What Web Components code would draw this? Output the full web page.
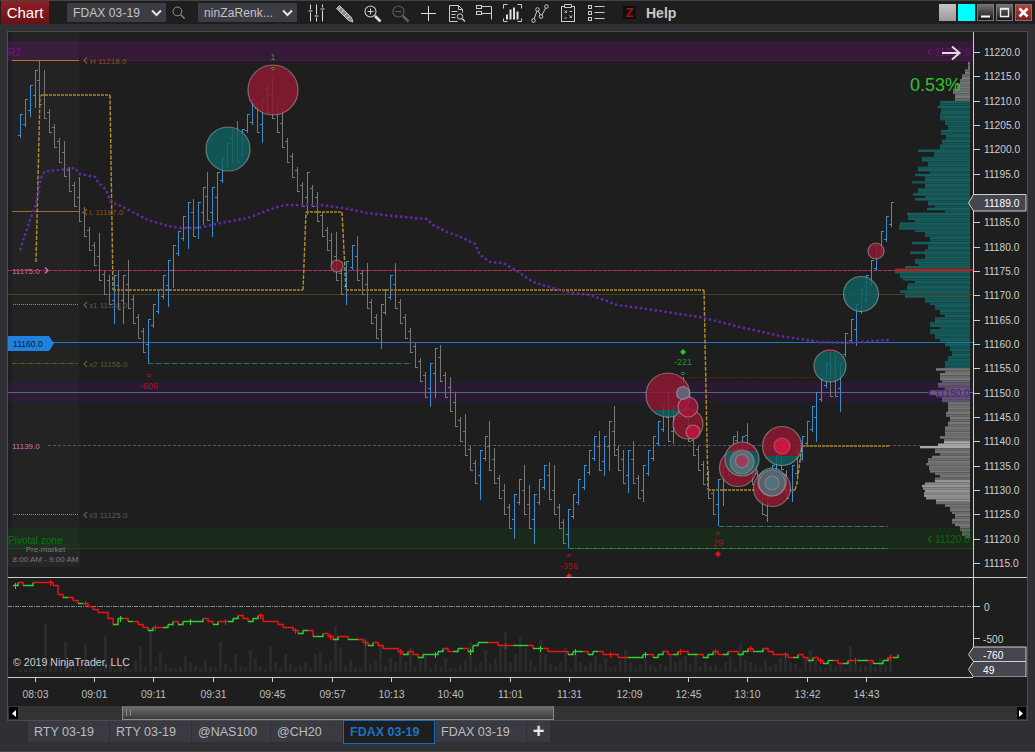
<!DOCTYPE html>
<html>
<head>
<meta charset="utf-8">
<title>Chart</title>
<style>
  html, body { margin: 0; padding: 0; background: #303034; }
  body { width: 1035px; height: 752px; overflow: hidden; font-family: "Liberation Sans", Arial, sans-serif; }
</style>
</head>
<body>
<nt-window></nt-window>
<script>
const FONT = '"Liberation Sans", Arial, sans-serif';

// x, top, bottom, b = up bar / g = down bar
const BARS = `20,114,138,b 25,99,127,b 30,85,117,b 35,70,108,b 39,60,105,g 44,70,119,g 49,109,133,g 54,124,148,g 59,138,163,g 64,141,177,g
69,167,192,g 74,182,207,g 79,177,222,g 84,207,237,g 89,227,251,g 94,242,266,g 99,233,281,g 104,271,295,g 109,275,305,g 114,275,324,b
118,270,310,g 123,275,324,b 128,260,309,g 133,295,324,g 138,314,339,g 143,328,353,g 148,319,363,b 153,304,328,b 158,289,314,b 163,275,299,b
168,260,307,b 173,245,288,b 178,231,256,b 183,216,241,b 188,202,249,b 193,199,237,g 198,202,239,b 203,187,225,b 207,172,221,g 212,187,237,b
217,172,222,b 222,158,183,b 227,143,168,b 232,129,163,g 237,121,163,g 242,129,158,b 247,114,133,b 252,99,125,b 257,102,133,g 262,99,143,b
267,85,113,g 272,77,119,g 277,102,133,g 282,109,148,g 287,138,163,g 292,153,178,g 297,167,192,g 302,182,207,g 307,172,215,b 312,185,207,g
317,192,222,g 322,212,237,g 327,227,251,g 331,233,265,g 336,232,281,g 341,270,295,g 346,261,305,b 352,245,270,b 357,236,281,g 362,270,295,g
367,263,309,g 371,299,324,g 376,314,339,g 381,304,349,b 385,289,315,b 390,275,300,b 395,263,309,g 400,299,324,g 405,314,339,g 410,328,353,g
415,343,368,g 420,358,382,g 425,372,398,g 430,363,407,b 435,348,398,b 440,345,382,g 445,372,398,g 450,377,412,g 455,393,427,g 460,417,442,g
465,414,456,g 470,446,471,g 475,460,484,g 480,450,500,b 485,436,461,b 489,421,471,g 494,448,484,g 499,475,499,g 504,484,515,g 509,504,529,g
514,494,539,b 519,479,505,b 524,465,515,g 529,485,529,g 534,494,544,b 539,479,505,b 544,465,490,b 549,462,500,g 554,465,515,g 559,504,529,g
563,519,544,g 568,509,548,b 573,494,519,b 578,479,505,b 584,465,490,b 589,450,475,b 594,436,461,b 599,431,471,g 604,436,476,b 609,421,471,b
614,406,456,g 618,446,471,g 623,450,484,g 628,450,493,b 633,441,484,g 638,475,499,g 643,465,502,b 648,450,476,b 653,436,461,b 658,421,446,b
663,406,432,b 668,392,442,g 673,406,444,b 678,393,417,g 683,377,408,g 688,407,442,g 693,437,456,g 698,446,471,g 703,461,485,g 708,470,499,g
713,490,515,g 718,479,526,b 723,465,506,b 728,455,476,g 733,436,465,b 737,431,465,g 742,436,465,b 747,423,460,g 752,455,485,g 757,470,495,g
762,487,515,g 767,490,522,b 772,465,495,b 776,455,487,b 781,445,470,g 786,470,499,g 792,465,502,b 797,450,476,b 802,436,461,b 807,421,446,b
812,406,432,b 816,392,442,b 821,378,402,b 826,363,388,b 830,353,397,g 835,355,397,g 840,363,412,b 845,333,357,b 851,319,343,b 856,304,346,b
861,289,314,b 866,275,303,b 871,260,286,b 876,245,271,b 881,231,255,b 886,216,242,b 891,202,227,b`
  .trim().split(/\s+/).map(s => { const p = s.split(','); return { x: +p[0], t: +p[1], b: +p[2], up: p[3] === 'b' }; });

const VWAP = '20,250 30,220 36,204 41,178 45,171 60,170 75,168 80,174 95,177 98,182 106,190 111,202 123,207 148,220 168,226 181,228 198,228 221,223 248,218 271,209 285,205 305,205 320,205 343,208 367,213 393,216 427,219 433,225 447,232 463,238 475,244 480,255 490,262 503,263 517,271 533,282 553,288 567,292 590,295 607,301 617,305 640,308 660,311 700,317 740,327 780,336 820,342 850,343 870,341 890,340';

// y, left edge of the volume profile row
const PROFILE = [[62,968],[68,965],[73,962],[78,960],[83,957],[88,953],[93,955],[100,940],[105,938],[108,941],[113,940],[118,945],[123,948],[128,941],[133,946],[138,942],[143,940],[148,918],[151,934],[155,922],[160,928],[165,918],[170,930],[173,915],[176,925],[180,912],[183,925],[186,908],[188,918],[191,913],[194,925],[197,915],[200,928],[203,935],[206,927],[210,945],[212,907],[215,908],[218,915],[220,900],[223,899],[226,899],[229,915],[232,925],[236,930],[240,912],[243,928],[247,925],[250,910],[253,925],[257,915],[262,918],[265,905],[268,895],[272,900],[276,903],[279,915],[282,908],[285,907],[288,900],[291,905],[294,905],[297,925],[301,930],[305,935],[309,940],[313,945],[317,935],[321,930],[325,940],[329,930],[333,935],[337,940],[341,945],[345,950],[350,952],[356,948],[360,945],[365,945],[367,936],[370,945],[373,940],[378,942],[382,938],[386,945],[390,930],[393,936],[397,942],[400,948],[405,948],[410,946],[415,950],[420,948],[425,945],[431,945],[435,940],[438,944],[442,938],[445,920],[448,935],[451,940],[455,932],[458,928],[461,926],[465,929],[468,930],[471,935],[474,940],[477,935],[480,925],[483,922],[486,923],[489,925],[492,924],[495,926],[498,936],[502,945],[505,950],[510,952],[513,955],[518,952],[522,955],[526,960],[530,962],[535,965]];

const CVD = '13,584 25,583 35,582 42,581 48,582 52,585 56,590 60,594 65,597 70,600 78,603 85,605 92,607 100,612 108,617 113,622 120,618 130,619 140,626 150,629 160,627 170,624 180,622 190,621 200,618 210,621 220,622 230,618 240,616 250,619 258,617 270,622 280,625 290,628 300,631 315,634 330,637 350,638 365,642 380,645 400,652 425,655 440,650 455,649 470,648 480,642 488,640 500,645 520,645 535,648 550,650 575,652 600,652 625,658 650,655 665,653 680,652 700,655 730,652 760,650 775,653 790,655 805,658 820,660 840,662 860,658 875,662 885,660 890,657 897,654';

const VOLUME = [2,3,4,3,5,48,10,6,7,30,12,4,6,28,5,15,4,36,9,3,7,8,3,12,26,5,44,6,20,8,4,3,5,16,10,6,4,12,6,5,30,8,4,18,6,5,22,14,6,3,26,10,5,18,8,5,6,10,4,18,20,8,12,46,24,7,12,5,4,34,8,12,26,6,14,10,20,10,24,6,12,16,4,8,6,14,4,3,7,12,30,5,10,22,8,14,28,40,10,18,36,24,12,6,32,18,8,6,10,24,4,18,10,6,9,16,8,14,5,6,12,22,10,4,8,13,7,5,8,6,18,10,12,16,8,20,6,10,6,7,3,10,15,5,28,12,10,7,5,12,6,8,14,18,10,8,3,14,22,12,6,4,8,5,10,4,26,8,7,6,12,5,14,7,18,6,4];

function pts(str) { return str.trim().split(/\s+/).map(p => p.split(',').map(Number)); }

function text(x, y, str, size, fill, extra) {
  return `<text x="${x}" y="${y}" font-size="${size}" fill="${fill}" ${extra || ''}>${str}</text>`;
}

// small chevron that sits before a level label
function chev(x, y, c, right) {
  const d = right ? `M${x} ${y - 3}L${x + 3} ${y}L${x} ${y + 3}` : `M${x + 3} ${y - 3}L${x} ${y}L${x + 3} ${y + 3}`;
  return `<path d="${d}" fill="none" stroke="${c}" stroke-width="1.3"/>`;
}

function bubble(id, x, y, r, red, teal, split, edge) {
  const stroke = edge || 'rgba(185,185,185,.5)';
  // red on top, teal below the split line
  if (split === undefined) {
    return `<circle cx="${x}" cy="${y}" r="${r}" fill="${red || teal}" stroke="${stroke}" stroke-width="1.2"/>`;
  }
  const off = ((split - (y - r)) / (2 * r)).toFixed(3);
  return `<linearGradient id="${id}" x1="0" y1="0" x2="0" y2="1"><stop offset="${off}" stop-color="${red}"/><stop offset="${off}" stop-color="${teal}"/></linearGradient>
    <circle cx="${x}" cy="${y}" r="${r}" fill="url(#${id})" stroke="${stroke}" stroke-width="1.2"/>`;
}

class NtSelect extends HTMLElement {
  connectedCallback() {
    const shadow = this.attachShadow({ mode: 'open' });
    shadow.innerHTML = `
      <style>
        :host { display: flex; align-items: center; justify-content: space-between; width: 99px; height: 19px; box-sizing: border-box;
          padding: 0 4px 0 6px; background: #3c3c44; color: #c4c4c4; font: 12px ${FONT}; letter-spacing: .1px; }
        svg { display: block; }
      </style>
      <slot></slot>
      <svg width="11" height="8" viewBox="0 0 11 8"><path d="M1 1.5 L5.5 6 L10 1.5" fill="none" stroke="#e4e4e4" stroke-width="2"/></svg>
    `;
  }
}
customElements.define('nt-select', NtSelect);

const ICONS = {
  sliders: '<path d="M4 1v5M4 9v9M10 1v10M10 14v4M16 1v3M16 7v11" stroke="#ddd"/><path d="M2 7.5h4M8 12.5h4M14 5.5h4" stroke="#ddd"/>',
  pencil: '<path d="M2 5 L5 2 L17 14 L18.5 18.5 L14 17 Z" fill="#8c8c8c" stroke="#ddd" stroke-width=".8"/><path d="M4 6 L6 4 M7 9 L9 7 M10 12 L12 10 M13 15 L15 13" stroke="#eee" stroke-width=".9"/>',
  zoomIn: '<circle cx="8" cy="8" r="5.5" fill="none" stroke="#ccc" stroke-width="1.1"/><path d="M5 8h6M8 5v6" stroke="#ccc"/><path d="M12.5 12.5 L18 18" stroke="#ddd" stroke-width="2.6"/>',
  zoomOut: '<circle cx="8" cy="8" r="5.5" fill="none" stroke="#5e5e5e" stroke-width="1.1"/><path d="M5 8h6" stroke="#5e5e5e"/><path d="M12.5 12.5 L18 18" stroke="#5e5e5e" stroke-width="2.6"/>',
  plus: '<path d="M2.5 10h15M10 2.5v15" stroke="#ddd"/>',
  docSearch: '<path d="M3 2h9l4 4v3M3 2v16h8M12 2v4h4" fill="none" stroke="#ccc"/><path d="M5 8h6M5 11h4M5 14h4" stroke="#ccc"/><circle cx="13.5" cy="13" r="2.7" fill="none" stroke="#ccc"/><path d="M15.5 15 L18.5 18" stroke="#ccc" stroke-width="1.4"/>',
  boxes: '<rect x="2" y="2" width="5" height="3" fill="none" stroke="#ccc"/><rect x="2" y="8" width="5" height="3" fill="none" stroke="#ccc"/><path d="M7 3h10M7 10h10M17 3v13" stroke="#ccc" fill="none"/>',
  bars: '<path d="M1 5V1h4M15 1h4V5M1 15v3h4M15 18h4V15" fill="none" stroke="#ccc"/><path d="M4.5 16v-5M8 16V6M11.5 16V4M15 16V8" stroke="#ddd" stroke-width="2"/>',
  nodes: '<path d="M3 17 L7 6 L10.5 13 L16 3" fill="none" stroke="#ccc"/><circle cx="3" cy="17" r="1.8" fill="#1e1e1e" stroke="#ccc"/><circle cx="7" cy="6" r="1.8" fill="#1e1e1e" stroke="#ccc"/><circle cx="10.5" cy="13" r="1.8" fill="#1e1e1e" stroke="#ccc"/><circle cx="16" cy="3" r="1.8" fill="#1e1e1e" stroke="#ccc"/>',
  docX: '<rect x="3" y="3" width="13" height="15" fill="none" stroke="#ccc"/><path d="M6 1h7v3H6z" fill="#1e1e1e" stroke="#ccc"/><path d="M6 7l2.5 2.5M8.5 7L6 9.5M11 12l2.5 2.5M13.5 12L11 14.5M6 14.5h2M11 8h2.5" stroke="#ccc"/>',
  list: '<rect x="2" y="2" width="3" height="3" fill="none" stroke="#ccc"/><rect x="2" y="8" width="3" height="3" fill="none" stroke="#ccc"/><rect x="2" y="14" width="3" height="3" fill="none" stroke="#ccc"/><path d="M8 3h10M8 9h10M8 15h10" stroke="#ccc"/>',
  search: '<circle cx="8" cy="8" r="5.5" fill="none" stroke="#999" stroke-width="1.2"/><path d="M12 12 L17 17" stroke="#999" stroke-width="1.6"/>'
};

class NtIcon extends HTMLElement {
  connectedCallback() {
    const shadow = this.attachShadow({ mode: 'open' });
    shadow.innerHTML = `
      <style>
        :host { display: flex; width: 28px; height: 24px; align-items: center; justify-content: center; }
        svg { display: block; }
      </style>
      <svg width="20" height="20" viewBox="0 0 20 20"><g transform="translate(.5 .5)">${ICONS[this.getAttribute('name')]}</g></svg>
    `;
  }
}
customElements.define('nt-icon', NtIcon);

class NtWinButton extends HTMLElement {
  connectedCallback() {
    const kind = this.getAttribute('kind');
    const shadow = this.attachShadow({ mode: 'open' });
    const glyph = {
      plain: '',
      min: '<path d="M4 12.5h9" stroke="#fff" stroke-width="2"/>',
      max: '<path d="M4.5 4.5h8v8h-8z M4 5h9" fill="none" stroke="#eee" stroke-width="1.3"/>',
      close: '<path d="M4.5 4.5 L12.5 12.5 M12.5 4.5 L4.5 12.5" stroke="#fff" stroke-width="2.6"/>'
    }[kind === 'gray' || kind === 'cyan' ? 'plain' : kind];
    const bg = { gray: 'linear-gradient(#c4c4c4,#9a9a9a)', cyan: '#00ffff', min: 'linear-gradient(#777,#111)', max: 'linear-gradient(#777,#111)', close: 'linear-gradient(#b8413f,#7e1c1c)' }[kind];
    shadow.innerHTML = `
      <style>
        :host { display: block; width: 17px; height: 17px; background: ${bg}; box-sizing: border-box; outline: ${kind === 'gray' || kind === 'cyan' ? 'none' : '1px solid #777'}; outline-offset: -1px; }
        svg { display: block; }
      </style>
      <svg width="17" height="17" viewBox="0 0 17 17">${glyph}</svg>
    `;
  }
}
customElements.define('nt-win-button', NtWinButton);

class NtToolbar extends HTMLElement {
  connectedCallback() {
    const names = ['sliders','pencil','zoomIn','zoomOut','plus','docSearch','boxes','bars','nodes','docX','list'];
    const shadow = this.attachShadow({ mode: 'open' });
    shadow.innerHTML = `
      <style>
        :host { display: flex; align-items: center; height: 24px; box-sizing: border-box; background: #1e1e1e; border-top: 1px solid #444;
          font-family: ${FONT}; padding-left: 1px; }
        .title { width: 48px; height: 23px; margin-top: 0; background: linear-gradient(#8e2026,#6a1116); color: #fff; font-size: 15px;
          display: flex; align-items: center; justify-content: center; }
        .first { margin-left: 18px; }
        .search { display: flex; width: 32px; justify-content: flex-start; padding-left: 5px; box-sizing: border-box; }
        .icons { display: flex; margin-left: 5px; }
        .z { margin-left: 13px; width: 13px; height: 13px; background: #0f0f0f; color: #a80e0e; font: bold 13px/13px ${FONT}; text-align: center; }
        .help { margin-left: 10px; color: #c8c8c8; font-weight: bold; font-size: 14px; }
        .spacer { flex: 1; }
        .win { display: flex; gap: 2px; padding-right: 3px; }
      </style>
      <div class="title">Chart</div>
      <nt-select class="first">FDAX 03-19</nt-select>
      <div class="search"><svg width="16" height="16" viewBox="0 0 20 20">${ICONS.search}</svg></div>
      <nt-select>ninZaRenk...</nt-select>
      <div class="icons">${names.map(n => `<nt-icon name="${n}"></nt-icon>`).join('')}</div>
      <div class="z">Z</div>
      <div class="help">Help</div>
      <div class="spacer"></div>
      <div class="win">
        <nt-win-button kind="gray"></nt-win-button>
        <nt-win-button kind="cyan"></nt-win-button>
        <nt-win-button kind="min"></nt-win-button>
        <nt-win-button kind="max"></nt-win-button>
        <nt-win-button kind="close"></nt-win-button>
      </div>
    `;
  }
}
customElements.define('nt-toolbar', NtToolbar);

class NtPricePanel extends HTMLElement {
  connectedCallback() {
    const shadow = this.attachShadow({ mode: 'open' });
    let s = '';

    // premarket column
    s += `<rect x="12" y="32" width="67" height="535" fill="#232323"/>`;
    s += `<rect x="8" y="543" width="72" height="24" fill="#262626"/>`;

    // volume profile
    for (let y = 62, i = 0; y < 538; y += 2.43, i++) {
      let left = 970;
      for (const k of PROFILE) { if (k[0] <= y) left = k[1]; else break; }
      const isTeal = y >= 100 && y < 366;
      let col = isTeal ? (i % 2 ? '#145656' : '#175f5f') : (i % 2 ? '#6c6c6c' : '#787878');
      if (y > 440 && y < 448) col = '#a8a8a8';
      if (y > 478 && y < 500) col = i % 2 ? '#8a8a8a' : '#969696';
      s += `<rect x="${left}" y="${y.toFixed(1)}" width="${970 - left}" height="2.43" fill="${col}"/>`;
    }

    // zones
    s += `<rect x="8" y="41" width="965" height="20" fill="rgba(110,20,117,.3)"/><rect x="8" y="60" width="965" height="1" fill="#560f5c"/>`;
    s += `<rect x="8" y="382" width="965" height="20" fill="rgba(70,20,100,.3)"/>`;
    s += `<rect x="8" y="528" width="965" height="21" fill="rgba(17,73,23,.3)"/><rect x="8" y="548" width="965" height="1" fill="#14481e"/>`;

    // level lines
    const line = (x1, x2, y, c, dash, w) => `<line x1="${x1}" x2="${x2}" y1="${y}" y2="${y}" stroke="${c}" stroke-width="${w || 1}" ${dash ? `stroke-dasharray="${dash}"` : ''}/>`;
    s += line(12, 79, 60.5, '#c06e22');
    s += line(12, 79, 211.5, '#96703a');
    s += line(8, 905, 270.5, '#bb2a5a', '4 1');
    s += line(895, 973, 270, '#e01010', '', 2);
    s += line(8, 973, 294.5, '#45451f');
    s += line(13, 78, 304.5, '#8a8a8a', '1 1');
    s += line(12, 78, 363.5, '#5f5f2c', '5 1 1 1');
    s += line(148, 412, 363.5, '#327650', '5 1 1 1');
    s += line(8, 975, 342.5, '#1b78d2');
    s += line(8, 973, 392.5, '#4f6a80');
    s += line(48, 920, 445.5, '#6b4b6b', '3 2');
    s += line(13, 78, 514.5, '#8a8a8a', '1 1');
    s += line(683, 815, 377.5, '#581c1c', '4 1 1 1');
    s += line(719, 888, 526.5, '#28805a', '5 1 1 1');
    s += line(569, 888, 548.5, '#2a8a50', '5 1 1 1');

    // price bars
    for (const b of BARS) {
      const c = b.up ? '#3d8ccb' : '#777777';
      const open = b.up ? Math.min(b.t + 25, b.b - 3) : Math.max(b.b - 25, b.t + 3);
      const close = b.up ? b.t : b.b - 1;
      s += `<path d="M${b.x + .5} ${b.t}V${b.b}M${b.x + 1} ${close + .5}h2M${b.x} ${open + .5}h-2" stroke="${c}" fill="none"/>`;
    }

    // stop line (gold)
    s += `<path d="M113 290H303M306 212H342M346 290H704M708 490H795M802 446H889M41 95H110" fill="none" stroke="#8a6c24" stroke-width="2" stroke-dasharray="3 1"/>`;
    s += `<path d="M36 262L40 95M110 95L113 290M303 290L306 212M342 212L346 290M704 290L708 490M795 490L797 483L802 446" fill="none" stroke="#b8902a" stroke-width="1.4" stroke-dasharray="4 1.5"/>`;

    // vwap
    s += `<polyline points="${VWAP}" fill="none" stroke="#5f2aa5" stroke-width="2.5" stroke-dasharray="2.5 2.5"/>`;

    // bubbles
    const RED = 'rgba(140,24,48,.86)', TEAL = 'rgba(16,98,98,.82)', HOT = 'rgba(190,24,60,.85)', SOFT = 'rgba(185,185,185,.35)';
    s += bubble('b1', 273, 90, 25, RED);
    s += bubble('b2', 228, 149, 22, '', TEAL);
    s += bubble('b3', 337, 266, 6, RED);
    s += bubble('b4', 668, 395, 22, RED, TEAL, 410);
    s += bubble('b5', 688, 424, 15, RED);
    s += bubble('b6', 688, 407, 10, 'rgba(160,24,56,.85)');
    s += bubble('b7', 683, 393, 6.5, 'rgba(90,120,140,.75)');
    s += bubble('b8', 693, 432, 7, HOT);
    s += bubble('b9', 738, 468, 18.5, RED);
    s += bubble('b10', 742, 459, 17, RED, TEAL, 451);
    s += bubble('b11', 742, 462, 12, 'rgba(110,130,140,.6)', '', undefined, SOFT);
    s += bubble('b12', 742, 461, 6.5, 'rgba(170,50,85,.8)', '', undefined, SOFT);
    s += bubble('b13', 772, 488, 18.5, RED);
    s += bubble('b14', 772, 482, 14, TEAL);
    s += bubble('b15', 772, 483, 13, 'rgba(120,105,120,.65)', '', undefined, SOFT);
    s += bubble('b16', 772, 483, 7, 'rgba(80,115,130,.85)', '', undefined, SOFT);
    s += bubble('b17', 782, 446, 19.5, RED, TEAL, 456);
    s += bubble('b18', 782, 446, 8, 'rgba(215,24,66,.85)', '', undefined, SOFT);
    s += bubble('b19', 830, 366, 16, RED, TEAL, 352);
    s += bubble('b20', 861, 294, 17.5, '', TEAL);
    s += bubble('b21', 876, 251, 8, RED);

    // blue tag
    s += `<path d="M8 336H49L54 343.5L49 351H8Z" fill="#1f82de"/>`;

    // signal markers
    const ring = (x, y, c) => `<ellipse cx="${x}" cy="${y}" rx="1.7" ry="1.1" fill="none" stroke="${c}"/>`;
    const diamond = (x, y, c) => `<path d="M${x} ${y - 3}L${x + 3} ${y}L${x} ${y + 3}L${x - 3} ${y}Z" fill="${c}"/>`;
    s += ring(273, 68.5, '#3f8f30') + ring(149, 375.5, '#b01020') + ring(569, 555.5, '#b01020') + ring(683, 373.5, '#2a8f30') + ring(718, 533.5, '#b01020');
    s += diamond(683, 352, '#26c926') + diamond(718, 554, '#f01010') + diamond(569, 576, '#f01010');

    const mid = 'text-anchor="middle"';
    s += text(273, 60, '1', 9, '#3f8f30', mid);
    s += text(149, 389, '-606', 9, '#a81020', mid);
    s += text(569, 569, '-356', 9, '#a81020', mid);
    s += text(683, 365, '-221', 9, '#2a8f30', mid);
    s += text(718, 546, '29', 9, '#a81020', mid);

    // labels
    s += text(8, 56, 'R2', 10, '#7a0f84');
    s += text(8, 544, 'Pivotal zone', 10, '#0a750a');
    s += text(45.5, 552, 'Pre-market', 8, '#7a7a7a', mid);
    s += text(45.5, 562, '8:00 AM - 9:00 AM', 8, '#7a7a7a', mid);
    s += chev(84, 60.5, '#8a5416') + text(90, 63.5, 'H 11218.0', 8, '#8a5416');
    s += chev(84, 212, '#8a5416') + text(89, 215, 'L 11187.0', 8, '#8a5416');
    s += chev(84, 305, '#5c5c5c') + text(89, 308, 'x1 11158.0', 8, '#5c5c5c');
    s += chev(84, 364, '#5c5c2c') + text(89, 367, 'x2 11156.0', 8, '#5c5c2c');
    s += chev(84, 515, '#5c5c5c') + text(89, 518, 'x3 11125.0', 8, '#5c5c5c');
    s += text(12, 274, '11175.0', 8, '#d070c4') + chev(45, 270.5, '#d070c4', true);
    s += text(12, 449, '11139.0', 8, '#d070c4');
    s += text(13, 346.5, '11160.0', 8.6, '#0c1c30');
    s += chev(928, 52, '#6c1078') + text(935, 56, '11220.0', 10, '#6c1078');
    s += chev(928, 393, '#4c1a90') + text(935, 397, '11150.0', 10, '#4c1a90');
    s += chev(928, 539, '#0c680c') + text(935, 543, '11120.0', 10, '#0c680c');
    s += text(910, 91, '0.53%', 18, '#2fc12f');
    s += `<path d="M942 53H959M952 46.5L959.5 53L952 59.5" fill="none" stroke="#ddd" stroke-width="2"/>`;

    // price axis, 11190 sits under the last price tag
    s += `<line x1="973.5" x2="973.5" y1="32" y2="577" stroke="#cfcfcf"/>`;
    for (let p = 11220, i = 0; p >= 11115; p -= 5, i++) {
      const y = Math.round(52 + i * 24.33) + .5;
      s += `<line x1="974" x2="980" y1="${y}" y2="${y}" stroke="#cfcfcf"/>`;
      if (p !== 11190) s += text(984, y + 3.5, p + '.0', 10.2, '#cfcfcf');
    }
    s += `<path d="M968.5 203L973.5 194.5H1026V211H973.5Z" fill="#46464e" stroke="#cfcfcf"/>`;
    s += text(984, 207, '11189.0', 10.2, '#fff');

    shadow.innerHTML = `
      <style>
        :host { display: block; height: 545px; }
        svg { display: block; font-family: ${FONT}; }
      </style>
      <svg width="1019" height="545" viewBox="8 32 1019 545">${s}</svg>
    `;
  }
}
customElements.define('nt-price-panel', NtPricePanel);

class NtIndicatorPanel extends HTMLElement {
  connectedCallback() {
    const shadow = this.attachShadow({ mode: 'open' });
    let s = '';

    // volume
    VOLUME.forEach((h, i) => { if (19 + i * 5 <= 890) s += `<rect x="${19 + i * 5}" y="${672 - h}" width="3" height="${h}" fill="#2a2a2a"/>`; });

    s += `<line x1="8" x2="973" y1="606.5" y2="606.5" stroke="#8a8a8a" stroke-dasharray="4 1 1 1"/>`;

    // stepped delta line, sampled every 5px
    const keys = pts(CVD);
    const at = x => {
      for (let i = 1; i < keys.length; i++) {
        if (x <= keys[i][0]) {
          const a = keys[i - 1], b = keys[i];
          return a[1] + (b[1] - a[1]) * (x - a[0]) / (b[0] - a[0]);
        }
      }
      return keys[keys.length - 1][1];
    };
    let prev = Math.round(at(13) / 3) * 3;
    for (let x = 13; x < 895; x += 5) {
      const y = Math.round((at(x + 5) + Math.sin(x * 0.37) * 1.5) / 3) * 3;
      const down = y > prev || (y === prev && Math.sin(x * 0.11) < -0.2);
      const c = down ? '#f01414' : '#35d035';
      s += `<path d="M${x} ${prev + .5}H${x + 5}V${y + .5}" fill="none" stroke="${c}" stroke-width="1.4"/>`;
      if ((x - 13) % 35 === 0) s += `<line x1="${x + 2.5}" x2="${x + 2.5}" y1="${prev - 2}" y2="${prev + 4}" stroke="${c}"/>`;
      prev = y;
    }

    s += text(13, 666, '© 2019 NinjaTrader, LLC', 10.6, '#cfcfcf');

    // axis
    s += `<line x1="973.5" x2="973.5" y1="578" y2="677" stroke="#cfcfcf"/>`;
    s += `<line x1="974" x2="980" y1="606.5" y2="606.5" stroke="#cfcfcf"/><line x1="974" x2="980" y1="638.5" y2="638.5" stroke="#cfcfcf"/>`;
    s += text(984, 611, '0', 10.2, '#cfcfcf');
    s += text(983, 643, '-500', 10.2, '#cfcfcf');
    s += `<path d="M968.5 654.5L973.5 647H1026V661.5H973.5Z" fill="#46464e" stroke="#cfcfcf"/>`;
    s += `<path d="M968.5 669.5L973.5 661.5H1026V677H973.5Z" fill="#46464e" stroke="#cfcfcf"/>`;
    s += text(983, 659, '-760', 10.2, '#fff');
    s += text(983, 674, '49', 10.2, '#fff');

    shadow.innerHTML = `
      <style>
        :host { display: block; height: 99px; border-top: 1px solid #cfcfcf; box-sizing: content-box; }
        svg { display: block; font-family: ${FONT}; }
      </style>
      <svg width="1019" height="99" viewBox="8 578 1019 99">${s}</svg>
    `;
  }
}
customElements.define('nt-indicator-panel', NtIndicatorPanel);

class NtTimeAxis extends HTMLElement {
  connectedCallback() {
    const labels = ['08:03','09:01','09:11','09:31','09:45','09:57','10:13','10:40','11:01','11:31','12:09','12:45','13:10','13:42','14:43'];
    const shadow = this.attachShadow({ mode: 'open' });
    let s = '';
    labels.forEach((t, i) => {
      const x = Math.round(34.5 + i * 59.4) + .5;
      s += `<line x1="${x}" x2="${x}" y1="678" y2="682" stroke="#cfcfcf"/>`;
      s += text(x, 698, t, 10.4, '#bdbdbd', 'text-anchor="middle"');
    });
    shadow.innerHTML = `
      <style>
        :host { display: block; height: 28px; border-top: 1px solid #cfcfcf; margin-right: 54px; }
        svg { display: block; font-family: ${FONT}; }
      </style>
      <svg width="965" height="28" viewBox="8 678 965 28">${s}</svg>
    `;
  }
}
customElements.define('nt-time-axis', NtTimeAxis);

class NtScrollbar extends HTMLElement {
  connectedCallback() {
    const shadow = this.attachShadow({ mode: 'open' });
    shadow.innerHTML = `
      <style>
        :host { display: flex; align-items: center; height: 14px; background: #333335; position: relative; }
        .btn { width: 9px; height: 12px; background: #000; display: flex; align-items: center; justify-content: center; margin: 0 1px; }
        .track { flex: 1; height: 14px; padding-left: 103px; box-sizing: border-box; }
        .thumb { width: 432px; height: 14px; box-sizing: border-box; background: linear-gradient(#6e6e6e,#585858 40%,#3a3a3a); border: 1px solid #8a8a8a; border-top-color: #666; border-right-color: #888; padding: 2px 0 0 3px; }
        .grip { width: 3px; height: 7px; border-left: 1px solid #888; border-right: 1px solid #888; }
        svg { display: block; }
      </style>
      <div class="btn"><svg width="5" height="7"><path d="M5 0V7L1 3.5Z" fill="#fff"/></svg></div>
      <div class="track"><div class="thumb"><div class="grip"></div></div></div>
      <div class="btn"><svg width="5" height="7"><path d="M0 0V7L4 3.5Z" fill="#fff"/></svg></div>
    `;
  }
}
customElements.define('nt-scrollbar', NtScrollbar);

class NtTab extends HTMLElement {
  connectedCallback() {
    const shadow = this.attachShadow({ mode: 'open' });
    shadow.innerHTML = `
      <style>
        :host { display: flex; align-items: center; box-sizing: border-box; height: 21px; padding: 0 6px; background: #3a3a42; color: #bdbdbd;
          font: 12.5px ${FONT}; }
        :host([active]) { height: 24px; margin-top: -1px; padding-left: 6px; background: #1e1e1e; color: #1a72c6; font-weight: bold; border: 1px solid #0f6fc2; }
        :host([add]) { justify-content: center; padding: 0; color: #e8e8e8; font-size: 20px; font-weight: bold; }
      </style>
      <slot></slot>
    `;
  }
}
customElements.define('nt-tab', NtTab);

class NtTabs extends HTMLElement {
  connectedCallback() {
    const shadow = this.attachShadow({ mode: 'open' });
    shadow.innerHTML = `
      <style>
        :host { display: flex; gap: 1px; padding-left: 28px; height: 30px; box-sizing: border-box; align-items: flex-start; }
      </style>
      <slot></slot>
    `;
  }
}
customElements.define('nt-tabs', NtTabs);

class NtWindow extends HTMLElement {
  connectedCallback() {
    const shadow = this.attachShadow({ mode: 'open' });
    shadow.innerHTML = `
      <style>
        :host { display: block; width: 1035px; height: 752px; background: #303034; box-sizing: border-box; border-bottom: 1px solid #444; }
        .frame { margin: 7px 7px 0 7px; width: 1021px; box-sizing: border-box; border: 1px solid #4c4c4c; background: #1e1e1e; }
      </style>
      <nt-toolbar></nt-toolbar>
      <div class="frame">
        <nt-price-panel></nt-price-panel>
        <nt-indicator-panel></nt-indicator-panel>
        <nt-time-axis></nt-time-axis>
        <nt-scrollbar></nt-scrollbar>
      </div>
      <nt-tabs>
        <nt-tab style="width:81px">RTY 03-19</nt-tab>
        <nt-tab style="width:81px">RTY 03-19</nt-tab>
        <nt-tab style="width:78px">@NAS100</nt-tab>
        <nt-tab style="width:71px">@CH20</nt-tab>
        <nt-tab style="width:92px" active>FDAX 03-19</nt-tab>
        <nt-tab style="padding-left:5px;width:90px">FDAX 03-19</nt-tab>
        <nt-tab style="width:23px" add>+</nt-tab>
      </nt-tabs>
    `;
  }
}
customElements.define('nt-window', NtWindow);
</script>
</body>
</html>
